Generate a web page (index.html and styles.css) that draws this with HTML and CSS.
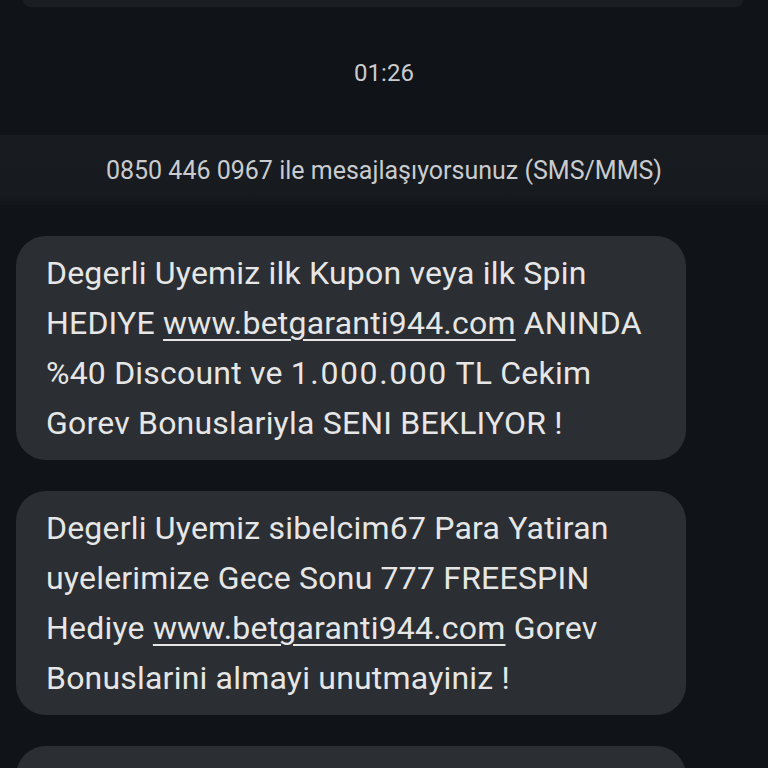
FILE: index.html
```html
<!DOCTYPE html>
<html lang="tr">
<head>
<meta charset="utf-8">
<title>Mesajlar</title>
<link rel="stylesheet" href="styles.css">
</head>
<body>
<div class="screen">
  <div class="prev-bubble"></div>
  <div class="timestamp">01:26</div>
  <div class="banner">0850 446 0967 ile mesajlaşıyorsunuz (SMS/MMS)</div>
  <div class="thread">
    <div class="bubble">Degerli Uyemiz ilk Kupon veya ilk Spin<br>HEDIYE <span class="link">www.betgaranti944.com</span> ANINDA<br>%40 Discount ve <span class="num">1.000.000</span> TL Cekim<br>Gorev Bonuslariyla SENI BEKLIYOR !</div>
    <div class="bubble">Degerli Uyemiz sibelcim67 Para Yatiran<br>uyelerimize Gece Sonu 777 FREESPIN<br>Hediye <span class="link">www.betgaranti944.com</span> Gorev<br>Bonuslarini almayi unutmayiniz !</div>
    <div class="bubble bubble-cut"></div>
  </div>
</div>
</body>
</html>
```
FILE: styles.css
```css
html, body {
  margin: 0;
  padding: 0;
  background: #101317;
}
.screen {
  width: 768px;
  height: 768px;
  overflow: hidden;
  font-family: Roboto, "Noto Sans", sans-serif;
  color: #e4e4e4;
}
.prev-bubble {
  height: 7px;
  margin: 0 25px 0 23px;
  background: #1a1d21;
  border-radius: 0 0 14px 14px;
}
.timestamp {
  height: 128px;
  display: flex;
  align-items: center;
  justify-content: center;
  font-size: 24px;
  color: #c9cbce;
  padding-top: 3px;
  box-sizing: border-box;
}
.banner {
  height: 70px;
  display: flex;
  align-items: center;
  justify-content: center;
  background: linear-gradient(#181b1f 0%, #171a1e 85%, #131619 100%);
  font-size: 25px;
  color: #c9cbce;
}
.thread {
  display: flex;
  flex-direction: column;
  gap: 31px;
  padding: 31px 0 0 16px;
}
.bubble {
  width: 670px;
  box-sizing: border-box;
  background: #2b2e32;
  border-radius: 30px;
  padding: 12px 20px 12px 30px;
  font-size: 32px;
  letter-spacing: 0.2px;
  line-height: 50px;
  color: #e6e6e6;
  white-space: nowrap;
}
.num {
  letter-spacing: 1.6px;
}
.link {
  text-decoration: underline;
  text-decoration-thickness: 2px;
  text-underline-offset: 5px;
}
.bubble-cut {
  height: 60px;
}
```
